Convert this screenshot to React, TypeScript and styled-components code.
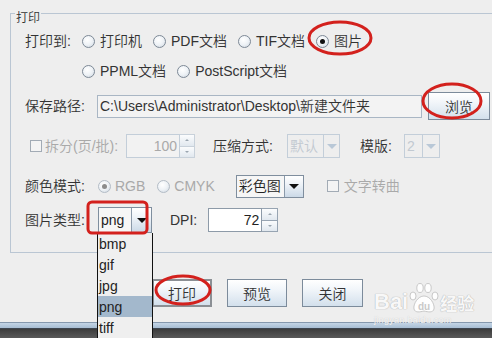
import React from "react";
import styled, { createGlobalStyle, css } from "styled-components";

const GlobalStyle = createGlobalStyle`
  html, body { margin: 0; padding: 0; background: #eeeeee; }
  body { font-family: "Liberation Sans", "Noto Sans CJK SC", sans-serif; font-size: 14px; font-weight: 350; color: #333; }
`;

const ml = css<{ $ml?: number }>`
  margin-left: ${(p) => p.$ml ?? 0}px;
`;

const Page = styled.div`
  position: relative;
  width: 492px;
  height: 338px;
  overflow: hidden;
  background: #eeeeee;
  display: flex;
  flex-direction: column;
  padding-top: 13px;
  box-sizing: border-box;
`;

const GroupBox = styled.div`
  position: relative;
  margin-left: 10px;
  width: 520px;
  flex: none;
  border: 1px solid #bac6d3;
  border-right: none;
  padding: 0 0 19px 14px;
  display: flex;
  flex-direction: column;
`;

const GroupTitle = styled.span`
  position: absolute;
  left: 4px;
  top: -3px;
  padding: 0 1px;
  background: #eeeeee;
  font-size: 12px;
  line-height: 14px;
  color: #333;
`;

const Row = styled.div<{ $mt: number; $h: number }>`
  display: flex;
  align-items: center;
  margin-top: ${(p) => p.$mt}px;
  height: ${(p) => p.$h}px;
  white-space: nowrap;
`;

const Label = styled.span<{ $w?: number; $ml?: number; $disabled?: boolean }>`
  ${ml};
  ${(p) => (p.$w ? `width: ${p.$w}px;` : "")}
  flex: none;
  line-height: 16px;
  color: ${(p) => (p.$disabled ? "#a9a9a9" : "#333")};
`;

const OptionGroup = styled.div`
  display: flex;
  align-items: center;
  gap: 11px;
`;

const Option = styled.label<{ $gap?: number; $ml?: number }>`
  ${ml};
  display: flex;
  align-items: center;
  gap: ${(p) => p.$gap ?? 5}px;
  flex: none;
  line-height: 16px;
`;

const RadioCircle = styled.span<{ $checked?: boolean; $disabled?: boolean }>`
  width: 13px;
  height: 13px;
  box-sizing: border-box;
  border-radius: 50%;
  flex: none;
  border: 1px solid ${(p) => (p.$disabled ? "#b3bcc6" : "#7d8996")};
  background: radial-gradient(circle at 40% 35%, #ffffff 0%, #eef2f6 50%, #cdd6df 100%);
  display: flex;
  align-items: center;
  justify-content: center;
  &::after {
    content: "";
    display: ${(p) => (p.$checked ? "block" : "none")};
    width: 5px;
    height: 5px;
    border-radius: 50%;
    background: ${(p) => (p.$disabled ? "#8c8c8c" : "#111")};
  }
`;

const CheckSquare = styled.span`
  width: 12px;
  height: 12px;
  box-sizing: border-box;
  flex: none;
  border: 1px solid #a2abb5;
  background: #f4f4f4;
`;

const OptText = styled.span<{ $disabled?: boolean }>`
  color: ${(p) => (p.$disabled ? "#a9a9a9" : "#333")};
`;

const TextField = styled.div<{ $w: number }>`
  width: ${(p) => p.$w}px;
  height: 23px;
  box-sizing: border-box;
  flex: none;
  border: 1px solid #a9b6c4;
  background: #f3f3f3;
  padding-left: 2px;
  display: flex;
  align-items: center;
  line-height: 16px;
  color: #333;
  overflow: hidden;
`;

const Button = styled.button<{ $ml?: number; $w: number; $focused?: boolean }>`
  ${ml};
  width: ${(p) => p.$w}px;
  height: 28px;
  flex: none;
  box-sizing: border-box;
  padding: 0;
  font-family: inherit;
  font-size: 14px;
  font-weight: 350;
  color: #333;
  border: ${(p) => (p.$focused ? "2px solid #8b8f94" : "1px solid #7c8b9b")};
  background: linear-gradient(to bottom, #ffffff 0%, #f2f6fa 35%, #d3e0ec 100%);
  display: flex;
  align-items: center;
  justify-content: center;
`;

const Combo = styled.div<{ $w: number; $h: number; $ml?: number; $disabled?: boolean }>`
  ${ml};
  width: ${(p) => p.$w}px;
  height: ${(p) => p.$h}px;
  flex: none;
  box-sizing: border-box;
  border: 1px solid ${(p) => (p.$disabled ? "#c3ced9" : "#7f8e9e")};
  display: flex;
  background: ${(p) => (p.$disabled ? "#eeeeee" : "#f6f6f6")};
`;

const ComboText = styled.span<{ $disabled?: boolean }>`
  flex: 1;
  display: flex;
  align-items: center;
  padding-left: 2px;
  line-height: 16px;
  color: ${(p) => (p.$disabled ? "#c2c9d1" : "#222")};
`;

const ComboArrow = styled.span<{ $w: number; $disabled?: boolean }>`
  width: ${(p) => p.$w}px;
  flex: none;
  box-sizing: border-box;
  border-left: 1px solid ${(p) => (p.$disabled ? "#c3ced9" : "#8b9aaa")};
  background: ${(p) =>
    p.$disabled ? "#eeeeee" : "linear-gradient(to bottom, #ffffff 0%, #eef3f8 40%, #cbd9e7 100%)"};
  display: flex;
  align-items: center;
  justify-content: center;
`;

const DownTriangle = styled.span<{ $disabled?: boolean }>`
  width: 0;
  height: 0;
  border-left: 5px solid transparent;
  border-right: 5px solid transparent;
  border-top: 5px solid ${(p) => (p.$disabled ? "#b9c8d7" : "#111")};
`;

const Spinner = styled.div<{ $ml?: number }>`
  ${ml};
  display: flex;
  flex: none;
  height: 24px;
`;

const SpinField = styled.div<{ $w: number; $disabled?: boolean }>`
  width: ${(p) => p.$w}px;
  box-sizing: border-box;
  border: 1px solid ${(p) => (p.$disabled ? "#c3ced9" : "#8d9aa8")};
  background: ${(p) => (p.$disabled ? "#f2f2f2" : "#ffffff")};
  display: flex;
  align-items: center;
  justify-content: flex-end;
  padding-right: 2px;
  line-height: 16px;
  color: ${(p) => (p.$disabled ? "#a9a9a9" : "#222")};
`;

const SpinButtons = styled.div<{ $w: number }>`
  width: ${(p) => p.$w}px;
  display: flex;
  flex-direction: column;
`;

const SpinHalf = styled.span<{ $disabled?: boolean }>`
  flex: 1;
  box-sizing: border-box;
  border: 1px solid ${(p) => (p.$disabled ? "#c8d1da" : "#97a4b2")};
  border-left: none;
  & + & { border-top: none; }
  background: linear-gradient(to bottom, #fbfcfd, #e1e8ef);
  display: flex;
  align-items: center;
  justify-content: center;
`;

const SmallTri = styled.span<{ $up?: boolean }>`
  width: 0;
  height: 0;
  border-left: 2px solid transparent;
  border-right: 2px solid transparent;
  ${(p) => (p.$up ? "border-bottom: 2px solid #9aa5b0;" : "border-top: 2px solid #9aa5b0;")}
`;

const ButtonBar = styled.div`
  display: flex;
  gap: 15px;
  margin-top: 26px;
  padding-left: 152px;
  height: 28px;
  flex: none;
`;

const WindowEdge = styled.div`
  margin-top: 15px;
  flex: none;
  display: flex;
  flex-direction: column;
`;

const EdgeBand = styled.div<{ $h: number; $bg: string }>`
  height: ${(p) => p.$h}px;
  background: ${(p) => p.$bg};
`;

const Popup = styled.div`
  position: absolute;
  left: 97px;
  top: 233px;
  width: 56px;
  box-sizing: border-box;
  border-left: 1px solid #111;
  border-right: 1px solid #111;
  background: #efefef;
  display: flex;
  flex-direction: column;
`;

const PopupItem = styled.div<{ $selected?: boolean }>`
  height: 21px;
  padding-left: 1px;
  display: flex;
  align-items: center;
  line-height: 16px;
  color: #222;
  background: ${(p) => (p.$selected ? "#a3b8cc" : "transparent")};
`;

const Marks = styled.svg`
  position: absolute;
  left: 0;
  top: 0;
  pointer-events: none;
`;

const Watermark = styled.div`
  position: absolute;
  left: 374px;
  top: 282px;
  display: flex;
  flex-direction: column;
  align-items: flex-start;
  pointer-events: none;
`;

const WmLine = styled.div`
  display: flex;
  align-items: flex-end;
  gap: 1px;
`;

const WmBig = styled.span<{ $size: number }>`
  font-size: ${(p) => p.$size}px;
  font-weight: bold;
  line-height: ${(p) => p.$size + 2}px;
  color: rgba(255, 255, 255, 0.92);
  text-shadow: 0 0 1px #b5b5b5, 0 0 1px #b5b5b5;
`;

const WmSmall = styled.span`
  font-size: 9px;
  line-height: 10px;
  margin-top: 1px;
  color: rgba(255, 255, 255, 0.85);
  text-shadow: 0 0 1px #bbb;
  letter-spacing: 0.3px;
`;

const Radio = ({ label, checked, disabled, gap, $ml }: { label: string; checked?: boolean; disabled?: boolean; gap?: number; $ml?: number }) => (
  <Option $gap={gap} $ml={$ml}>
    <RadioCircle $checked={checked} $disabled={disabled} />
    <OptText $disabled={disabled}>{label}</OptText>
  </Option>
);

const Check = ({ label, disabled, gap, $ml }: { label: string; disabled?: boolean; gap?: number; $ml?: number }) => (
  <Option $gap={gap} $ml={$ml}>
    <CheckSquare />
    <OptText $disabled={disabled}>{label}</OptText>
  </Option>
);

const ComboBox = ({ value, w, h, arrowW, disabled, $ml }: { value: string; w: number; h: number; arrowW: number; disabled?: boolean; $ml?: number }) => (
  <Combo $w={w} $h={h} $ml={$ml} $disabled={disabled}>
    <ComboText $disabled={disabled}>{value}</ComboText>
    <ComboArrow $w={arrowW} $disabled={disabled}>
      <DownTriangle $disabled={disabled} />
    </ComboArrow>
  </Combo>
);

const Spin = ({ value, w, bw, disabled, $ml }: { value: string; w: number; bw: number; disabled?: boolean; $ml?: number }) => (
  <Spinner $ml={$ml}>
    <SpinField $w={w} $disabled={disabled}>{value}</SpinField>
    <SpinButtons $w={bw}>
      <SpinHalf $disabled={disabled}><SmallTri $up /></SpinHalf>
      <SpinHalf $disabled={disabled}><SmallTri /></SpinHalf>
    </SpinButtons>
  </Spinner>
);

export default function App() {
  return (
    <>
      <GlobalStyle />
      <Page>
        <GroupBox>
          <GroupTitle>打印</GroupTitle>
          <Row $mt={13} $h={28}>
            <Label $w={57}>打印到:</Label>
            <OptionGroup>
              <Radio label="打印机" />
              <Radio label="PDF文档" />
              <Radio label="TIF文档" />
              <Radio label="图片" checked />
            </OptionGroup>
          </Row>
          <Row $mt={2} $h={28}>
            <Label $w={57} />
            <OptionGroup>
              <Radio label="PPML文档" />
              <Radio label="PostScript文档" />
            </OptionGroup>
          </Row>
          <Row $mt={7} $h={28}>
            <Label $w={72}>保存路径:</Label>
            <TextField $w={325}>C:\Users\Administrator\Desktop\新建文件夹</TextField>
            <Button $ml={6} $w={62}>浏览</Button>
          </Row>
          <Row $mt={13} $h={26}>
            <Check $ml={5} gap={3} label="拆分(页/批):" disabled />
            <Spin $ml={8} value="100" w={54} bw={15} disabled />
            <Label $ml={18}>压缩方式:</Label>
            <ComboBox $ml={14} value="默认" w={53} h={24} arrowW={16} disabled />
            <Label $ml={20}>模版:</Label>
            <ComboBox $ml={12} value="2" w={36} h={24} arrowW={17} disabled />
          </Row>
          <Row $mt={14} $h={26}>
            <Label $w={73}>颜色模式:</Label>
            <Radio label="RGB" checked disabled gap={4} />
            <Radio $ml={12} label="CMYK" disabled gap={4} />
            <ComboBox $ml={21} value="彩色图" w={68} h={23} arrowW={19} />
            <Check $ml={23} gap={5} label="文字转曲" disabled />
          </Row>
          <Row $mt={8} $h={26}>
            <Label $w={73}>图片类型:</Label>
            <ComboBox value="png" w={54} h={26} arrowW={20} />
            <Label $ml={18}>DPI:</Label>
            <Spin $ml={11} value="72" w={54} bw={16} />
          </Row>
        </GroupBox>
        <ButtonBar>
          <Button $w={60} $focused>打印</Button>
          <Button $w={60}>预览</Button>
          <Button $w={61}>关闭</Button>
        </ButtonBar>
        <WindowEdge>
          <EdgeBand $h={1} $bg="#8598ad" />
          <EdgeBand $h={5} $bg="linear-gradient(to bottom, #c4d5e6, #a7bdd3)" />
          <EdgeBand $h={1} $bg="#3e4650" />
          <EdgeBand $h={10} $bg="linear-gradient(to bottom, #3c3c3c, #5c5c5c)" />
        </WindowEdge>

        <Popup>
          <PopupItem>bmp</PopupItem>
          <PopupItem>gif</PopupItem>
          <PopupItem>jpg</PopupItem>
          <PopupItem $selected>png</PopupItem>
          <PopupItem>tiff</PopupItem>
        </Popup>

        <Watermark>
          <WmLine>
            <WmBig $size={22}>Bai</WmBig>
            <svg width="30" height="32" viewBox="0 0 30 32">
              <g fill="rgba(255,255,255,0.9)" stroke="#bdbdbd" strokeWidth="0.8">
                <ellipse cx="4" cy="14" rx="3" ry="4" />
                <ellipse cx="11" cy="6" rx="3.2" ry="4.5" />
                <ellipse cx="19" cy="6" rx="3.2" ry="4.5" />
                <ellipse cx="26" cy="14" rx="3" ry="4" />
                <path d="M15 14 C9 14 4 22 5 27 C6 31 11 30 15 29 C19 30 24 31 25 27 C26 22 21 14 15 14 Z" />
              </g>
              <text x="15" y="28" textAnchor="middle" fontSize="10" fontWeight="bold" fontFamily="Liberation Sans, sans-serif" fill="#c9c9c9">du</text>
            </svg>
            <WmBig $size={17}>经验</WmBig>
          </WmLine>
          <WmSmall>jingyan.baidu.com</WmSmall>
        </Watermark>

        <Marks width="492" height="338" viewBox="0 0 492 338">
          <g fill="none" stroke="#d3211d" strokeWidth="3">
            <ellipse cx="340" cy="38" rx="31" ry="16" />
            <ellipse cx="452" cy="101" rx="29" ry="17" />
            <rect x="88" y="202" width="59" height="31" rx="4" />
            <ellipse cx="183" cy="290" rx="27" ry="14" />
          </g>
        </Marks>
      </Page>
    </>
  );
}
